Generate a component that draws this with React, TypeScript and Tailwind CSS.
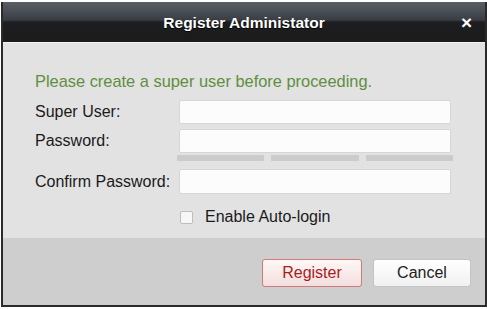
import React from "react";

export default function App() {
  return (
    <div className="w-[487px] h-[309px] bg-white pt-[2px] pl-[1px]" style={{ fontFamily: '"Liberation Sans", Arial, sans-serif' }}>
      <div className="w-[486px] h-[305px] flex flex-col border-x-2 border-b-2 border-[#2a2a2a] bg-[#e2e2e2]">
        {/* title bar */}
        <div className="relative h-[40px] shrink-0 bg-[linear-gradient(#5a5f66_0%,#3a3e44_45%,#1d1e20_50%,#1b1b1b_100%)] flex items-center justify-center">
          <span className="text-white font-bold text-[15.5px] pt-[1px] [text-shadow:0_1px_1px_#000]">Register Administator</span>
          <span className="absolute right-[13px] top-[11px] text-white font-bold text-[19px] leading-[19px]">×</span>
        </div>
        <div className="h-[1px] bg-[#f4f4f4] shrink-0" />
        {/* body */}
        <div className="h-[195px] shrink-0 pl-[32px] pt-[28px] text-[16px] text-[#1a1a1a]">
          <div className="h-[20px] leading-[20px] text-[16.4px] text-[#5e8f3f]">Please create a super user before proceeding.</div>
          <div className="mt-[9px] flex items-center">
            <div className="w-[144px]">Super User:</div>
            <div className="w-[272px] h-[24px] bg-[#fcfcfc] border border-[#d6d6d6] rounded-[2px]" />
          </div>
          <div className="mt-[5px] flex items-center">
            <div className="w-[144px]">Password:</div>
            <div className="w-[272px] h-[24px] bg-[#fcfcfc] border border-[#d6d6d6] rounded-[2px]" />
          </div>
          <div className="mt-[2px] ml-[142px] flex gap-[7px]">
            <div className="w-[87px] h-[6px] bg-[#cbcbcb] rounded-[1px]" />
            <div className="w-[88px] h-[6px] bg-[#cbcbcb] rounded-[1px]" />
            <div className="w-[87px] h-[6px] bg-[#cbcbcb] rounded-[1px]" />
          </div>
          <div className="mt-[8px] flex items-center">
            <div className="w-[144px]">Confirm Password:</div>
            <div className="w-[272px] h-[25px] bg-[#fcfcfc] border border-[#d6d6d6] rounded-[2px]" />
          </div>
          <div className="mt-[11px] ml-[145px] flex items-center">
            <div className="w-[13px] h-[13px] bg-[#f7f7f7] border border-[#bdbdbd] rounded-[2px]" />
            <span className="ml-[12px]">Enable Auto-login</span>
          </div>
        </div>
        {/* footer */}
        <div className="flex-1 bg-[#cecece] flex justify-end items-start pt-[21px] pr-[14px] gap-[11px]">
          <button className="w-[100px] h-[28px] rounded-[3px] border border-[#d27a7a] bg-[linear-gradient(#fff7f7,#f3dede)] text-[#a51d1d] text-[16px]">Register</button>
          <button className="w-[98px] h-[28px] rounded-[3px] border border-[#c4c4c4] bg-[linear-gradient(#ffffff,#f1f1f1)] text-[#222] text-[16px]">Cancel</button>
        </div>
      </div>
    </div>
  );
}
